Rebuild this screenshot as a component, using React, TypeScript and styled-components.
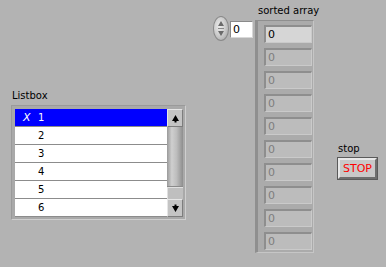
import React from "react";
import styled, { createGlobalStyle } from "styled-components";

const Global = createGlobalStyle`
  html, body { margin: 0; padding: 0; background: #b3b3b3; }
  * { box-sizing: border-box; }
`;

const Panel = styled.div`
  position: relative;
  width: 386px;
  height: 267px;
  background: #b3b3b3;
  font-family: "DejaVu Sans", "Liberation Sans", sans-serif;
  font-size: 10px;
  color: #000;
  overflow: hidden;
`;

const Control = styled.div<{ $x: number; $y: number }>`
  position: absolute;
  left: ${(p) => p.$x}px;
  top: ${(p) => p.$y}px;
  display: flex;
  flex-direction: column;
  align-items: flex-start;
`;

const Label = styled.div<{ $gap?: number; $indent?: number }>`
  line-height: 12px;
  margin-left: ${(p) => p.$indent ?? 0}px;
  margin-bottom: ${(p) => p.$gap ?? 2}px;
  white-space: nowrap;
`;

/* ---------- Listbox ---------- */
const ListFrame = styled.div`
  display: flex;
  width: 175px;
  padding: 3px 2px 2px 3px;
  background: #a9a9a9;
  border-top: 1px solid #9a9a9a;
  border-left: 1px solid #9a9a9a;
  border-right: 1px solid #cfcfcf;
  border-bottom: 1px solid #cfcfcf;
`;

const ListBody = styled.div`
  display: flex;
  flex-direction: column;
  width: 152px;
  background: #fff;
`;

const Row = styled.div<{ $sel?: boolean }>`
  display: flex;
  align-items: center;
  height: 18px;
  border-bottom: 1px solid #8c8c8c;
  background: ${(p) => (p.$sel ? "#0000ff" : "#ffffff")};
  color: ${(p) => (p.$sel ? "#ffffff" : "#000000")};
`;

const Mark = styled.span`
  width: 23px;
  padding-left: 8px;
  font-size: 11px;
  font-style: italic;
`;

const Scroll = styled.div`
  display: flex;
  flex-direction: column;
  width: 16px;
  background: #c9c9c9;
`;

const ScrollBtn = styled.div`
  display: flex;
  align-items: center;
  justify-content: center;
  height: 18px;
  background: #c4c4c4;
  border-top: 1px solid #e6e6e6;
  border-left: 1px solid #e6e6e6;
  border-right: 1px solid #7d7d7d;
  border-bottom: 1px solid #7d7d7d;
`;

const Thumb = styled.div`
  height: 60px;
  background: linear-gradient(90deg, #9a9a9a 0%, #cfcfcf 30%, #bdbdbd 60%, #8e8e8e 100%);
  border-bottom: 1px solid #8a8a8a;
`;

const Track = styled.div`
  flex: 1;
  background: #bfbfbf;
  border-top: 1px solid #e0e0e0;
  border-left: 1px solid #e0e0e0;
`;

/* ---------- Numeric ---------- */
const NumRow = styled.div`
  display: flex;
  align-items: flex-start;
`;

const Spin = styled.div`
  width: 16px;
  height: 25px;
  border-radius: 8px / 12px;
  background: radial-gradient(ellipse at 40% 40%, #ececec 0%, #cfcfcf 45%, #9d9d9d 100%);
  border: 1px solid #8a8a8a;
  display: flex;
  align-items: center;
  justify-content: center;
`;

const NumBox = styled.div`
  width: 23px;
  height: 17px;
  margin-top: 5px;
  margin-left: 1px;
  background: #fff;
  border-top: 1px solid #8a8a8a;
  border-left: 1px solid #8a8a8a;
  border-right: 1px solid #d8d8d8;
  border-bottom: 1px solid #d8d8d8;
  padding-left: 2px;
  line-height: 15px;
  font-size: 11px;
`;

/* ---------- Array ---------- */
const ArrayFrame = styled.div`
  display: flex;
  flex-direction: column;
  gap: 5px;
  width: 59px;
  height: 233px;
  padding: 4px 3px 0 6px;
  background: #ababab;
  border-top: 1px solid #8f8f8f;
  border-left: 3px solid #8f8f8f;
  border-right: 1px solid #c6c6c6;
  border-bottom: 1px solid #c6c6c6;
`;

const Elem = styled.div<{ $active?: boolean }>`
  width: 48px;
  height: 18px;
  background: ${(p) => (p.$active ? "#d6d6d6" : "#bcbcbc")};
  color: ${(p) => (p.$active ? "#000" : "#7e7e7e")};
  border-top: 2px solid #8e8e8e;
  border-left: 2px solid #8e8e8e;
  border-right: 1px solid #cacaca;
  border-bottom: 1px solid #cacaca;
  padding-left: 2px;
  line-height: 15px;
  font-size: 11px;
`;

/* ---------- Stop ---------- */
const StopBtn = styled.div`
  width: 39px;
  height: 21px;
  display: flex;
  align-items: center;
  justify-content: center;
  background: #c8c8c8;
  color: #ff0000;
  font-size: 11px;
  border-top: 2px solid #e8e8e8;
  border-left: 2px solid #e8e8e8;
  border-right: 2px solid #6e6e6e;
  border-bottom: 2px solid #6e6e6e;
  outline: 1px solid #5a5a5a;
`;

const Arrow = ({ up }: { up: boolean }) => (
  <svg width="9" height="9" viewBox="0 0 9 9">
    {up ? (
      <path d="M4.5 1 L8 7 L1 7 Z M3.5 7 L5.5 7 L5.5 8.5 L3.5 8.5 Z" fill="#000" />
    ) : (
      <path d="M1 2 L8 2 L4.5 8 Z M3.5 0.5 L5.5 0.5 L5.5 2 L3.5 2 Z" fill="#000" />
    )}
  </svg>
);

const SpinIcon = () => (
  <svg width="8" height="17" viewBox="0 0 8 17">
    <path d="M4 1 L7 6 L1 6 Z" fill="#6a6a6a" />
    <path d="M1 11 L7 11 L4 16 Z" fill="#6a6a6a" />
    <line x1="1" y1="8.5" x2="7" y2="8.5" stroke="#8a8a8a" strokeWidth="1" />
  </svg>
);

const items = ["1", "2", "3", "4", "5", "6"];

export default function App() {
  return (
    <>
      <Global />
      <Panel>
        <Control $x={11} $y={90}>
          <Label $indent={1} $gap={3}>Listbox</Label>
          <ListFrame>
            <ListBody>
              {items.map((t, i) => (
                <Row key={t} $sel={i === 0}>
                  <Mark>{i === 0 ? "X" : ""}</Mark>
                  <span>{t}</span>
                </Row>
              ))}
            </ListBody>
            <Scroll>
              <ScrollBtn>
                <Arrow up />
              </ScrollBtn>
              <Thumb />
              <Track />
              <ScrollBtn>
                <Arrow up={false} />
              </ScrollBtn>
            </Scroll>
          </ListFrame>
        </Control>

        <Control $x={213} $y={16}>
          <NumRow>
            <Spin>
              <SpinIcon />
            </Spin>
            <NumBox>0</NumBox>
          </NumRow>
        </Control>

        <Control $x={255} $y={5}>
          <Label $indent={3} $gap={3}>sorted array</Label>
          <ArrayFrame>
            {Array.from({ length: 10 }).map((_, i) => (
              <Elem key={i} $active={i === 0}>0</Elem>
            ))}
          </ArrayFrame>
        </Control>

        <Control $x={338} $y={143}>
          <Label $gap={3}>stop</Label>
          <StopBtn>STOP</StopBtn>
        </Control>
      </Panel>
    </>
  );
}
